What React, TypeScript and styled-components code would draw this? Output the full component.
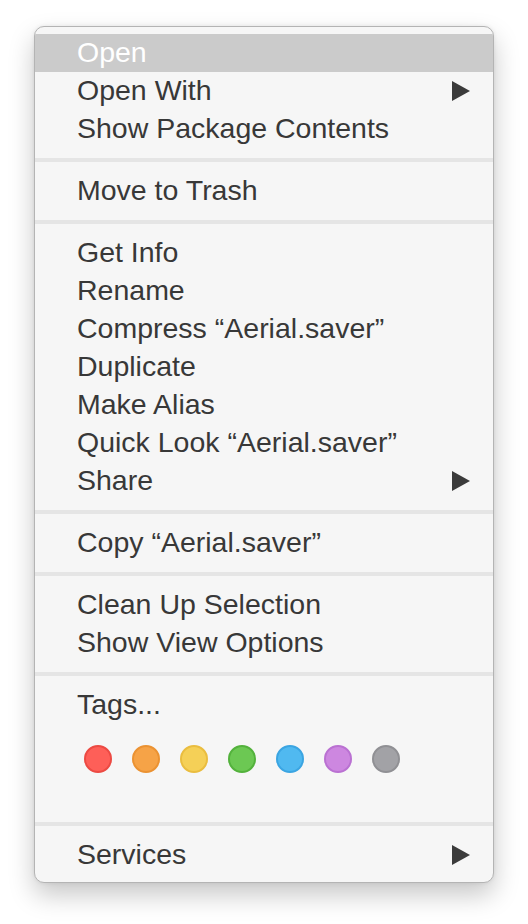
import styled, { createGlobalStyle } from 'styled-components';

const GlobalStyle = createGlobalStyle`
  html, body {
    margin: 0;
    padding: 0;
    background: #ffffff;
  }
  body {
    font-family: "Liberation Sans", Arial, sans-serif;
  }
`;

const Page = styled.div`
  padding: 26px 0 40px 34px;
`;

const Menu = styled.div`
  width: 460px;
  box-sizing: border-box;
  background: #f6f6f6;
  border: 1px solid #b4b4b4;
  border-radius: 10px;
  padding: 7px 0 8px;
  box-shadow: 0 12px 26px rgba(0, 0, 0, 0.22), 0 0 4px rgba(0, 0, 0, 0.08);
  overflow: hidden;
`;

const Item = styled.div<{ $active?: boolean }>`
  display: flex;
  align-items: center;
  justify-content: space-between;
  box-sizing: border-box;
  height: 38px;
  padding: 0 23px 2px 42px;
  font-size: 28.5px;
  color: ${(p) => (p.$active ? '#ffffff' : '#383838')};
  background: ${(p) => (p.$active ? '#cbcbcb' : 'transparent')};
  white-space: nowrap;
`;

const Separator = styled.div`
  height: 4px;
  margin: 10px 0;
  background: #e5e5e5;
`;

const TagRow = styled.div`
  display: flex;
  gap: 20px;
  padding: 21px 0 39px 49px;
`;

const Dot = styled.div<{ $fill: string; $edge: string }>`
  width: 28px;
  height: 28px;
  box-sizing: border-box;
  border-radius: 50%;
  background: ${(p) => p.$fill};
  border: 2px solid ${(p) => p.$edge};
`;

const ArrowSvg = styled.svg`
  flex: none;
  margin-top: 2px;
`;

const Arrow = () => (
  <ArrowSvg width="18" height="20" viewBox="0 0 18 20">
    <path d="M0 0 L18 10 L0 20 Z" fill="#3b3b3b" />
  </ArrowSvg>
);

const tags = [
  { fill: '#fe5f58', edge: '#ec4a43' },
  { fill: '#f6a347', edge: '#eb9232' },
  { fill: '#f5d057', edge: '#eabd3f' },
  { fill: '#6cc853', edge: '#53b23c' },
  { fill: '#50b9f0', edge: '#3ba5e2' },
  { fill: '#cd87e0', edge: '#ba71d2' },
  { fill: '#a2a2a6', edge: '#909094' },
];

export default function App() {
  return (
    <Page>
      <GlobalStyle />
      <Menu>
        <Item $active>Open</Item>
        <Item>
          Open With
          <Arrow />
        </Item>
        <Item>Show Package Contents</Item>
        <Separator />
        <Item>Move to Trash</Item>
        <Separator />
        <Item>Get Info</Item>
        <Item>Rename</Item>
        <Item>Compress “Aerial.saver”</Item>
        <Item>Duplicate</Item>
        <Item>Make Alias</Item>
        <Item>Quick Look “Aerial.saver”</Item>
        <Item>
          Share
          <Arrow />
        </Item>
        <Separator />
        <Item>Copy “Aerial.saver”</Item>
        <Separator />
        <Item>Clean Up Selection</Item>
        <Item>Show View Options</Item>
        <Separator />
        <Item>Tags...</Item>
        <TagRow>
          {tags.map((t) => (
            <Dot key={t.fill} $fill={t.fill} $edge={t.edge} />
          ))}
        </TagRow>
        <Separator />
        <Item>
          Services
          <Arrow />
        </Item>
      </Menu>
    </Page>
  );
}
